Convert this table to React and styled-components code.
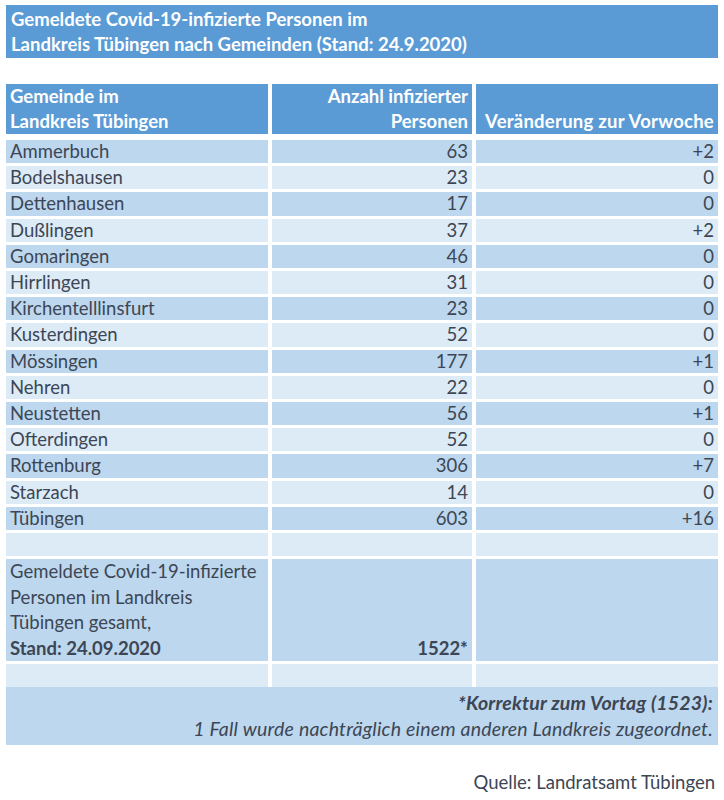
import React from "react";
import styled, { createGlobalStyle } from "styled-components";

const Global = createGlobalStyle`
  html, body { margin: 0; padding: 0; background: #ffffff; }
  body { font-family: Lato, "Open Sans", sans-serif; color: #3c4654; }
`;

const Page = styled.div`
  width: 724px;
  height: 800px;
  padding: 5px 6px 0 6px;
  box-sizing: border-box;
  display: flex;
  flex-direction: column;
`;

const Title = styled.div`
  background: #5b9bd5;
  color: #ffffff;
  font-weight: 700;
  font-size: 18.5px;
  line-height: 25px;
  padding: 2px 0 1px 5px;
  height: 53px;
  box-sizing: border-box;
`;

const Table = styled.div`
  margin-top: 26px;
  display: grid;
  grid-template-columns: 262px 200px 242px;
  column-gap: 4px;
  row-gap: 3px;
`;

const HeadCell = styled.div`
  background: #5b9bd5;
  color: #ffffff;
  font-weight: 700;
  font-size: 18.5px;
  line-height: 25px;
  height: 50px;
  box-sizing: border-box;
  padding: 0 4px 0 4px;
  display: flex;
  flex-direction: column;
  justify-content: flex-end;
  text-align: ${(p) => (p.$right ? "right" : "left")};
  letter-spacing: ${(p) => (p.$wide ? "0.25px" : "0")};
  margin-bottom: 3px;
`;

const Cell = styled.div`
  background: ${(p) => (p.$dark ? "#bdd7ee" : "#ddebf7")};
  font-size: 18.5px;
  line-height: ${(p) => (p.$tall ? "25.5px" : "23.2px")};
  min-height: 23.2px;
  padding: 0 4px;
  text-align: ${(p) => (p.$right ? "right" : "left")};
  font-weight: ${(p) => (p.$bold ? 700 : 400)};
  display: flex;
  flex-direction: column;
  justify-content: flex-end;
  white-space: nowrap;
`;

const Strong = styled.span`
  font-weight: 700;
`;

const Note = styled.div`
  grid-column: 1 / -1;
  margin-top: -3px;
  background: #bdd7ee;
  height: 58px;
  box-sizing: border-box;
  padding: 3px 5px 0 0;
  text-align: right;
  font-style: italic;
  font-size: 19.5px;
  letter-spacing: 0.2px;
  line-height: 26px;
`;

const Source = styled.div`
  margin-top: 24px;
  text-align: right;
  font-size: 18.5px;
  line-height: 26px;
  padding-right: 3px;
`;

const rows = [
  ["Ammerbuch", "63", "+2"],
  ["Bodelshausen", "23", "0"],
  ["Dettenhausen", "17", "0"],
  ["Dußlingen", "37", "+2"],
  ["Gomaringen", "46", "0"],
  ["Hirrlingen", "31", "0"],
  ["Kirchentelllinsfurt", "23", "0"],
  ["Kusterdingen", "52", "0"],
  ["Mössingen", "177", "+1"],
  ["Nehren", "22", "0"],
  ["Neustetten", "56", "+1"],
  ["Ofterdingen", "52", "0"],
  ["Rottenburg", "306", "+7"],
  ["Starzach", "14", "0"],
  ["Tübingen", "603", "+16"],
];

export default function App() {
  return (
    <Page>
      <Global />
      <Title>
        Gemeldete Covid-19-infizierte Personen im
        <br />
        Landkreis Tübingen nach Gemeinden (Stand: 24.9.2020)
      </Title>
      <Table>
        <HeadCell>
          <div>Gemeinde im</div>
          <div>Landkreis Tübingen</div>
        </HeadCell>
        <HeadCell $right>
          <div>Anzahl infizierter</div>
          <div>Personen</div>
        </HeadCell>
        <HeadCell $right $wide>
          <div>Veränderung zur Vorwoche</div>
        </HeadCell>
        {rows.map(([name, n, d], i) => (
          <React.Fragment key={name}>
            <Cell $dark={i % 2 === 0}>{name}</Cell>
            <Cell $dark={i % 2 === 0} $right>{n}</Cell>
            <Cell $dark={i % 2 === 0} $right>{d}</Cell>
          </React.Fragment>
        ))}
        <Cell />
        <Cell />
        <Cell />
        <Cell $dark $tall>
          <div>Gemeldete Covid-19-infizierte</div>
          <div>Personen im Landkreis</div>
          <div>Tübingen gesamt,</div>
          <Strong>Stand: 24.09.2020</Strong>
        </Cell>
        <Cell $dark $tall $right $bold>1522*</Cell>
        <Cell $dark $tall />
        <Cell />
        <Cell />
        <Cell />
        <Note>
          <Strong>*Korrektur zum Vortag (1523):</Strong>
          <br />1 Fall wurde nachträglich einem anderen Landkreis zugeordnet.
        </Note>
      </Table>
      <Source>Quelle: Landratsamt Tübingen</Source>
    </Page>
  );
}
